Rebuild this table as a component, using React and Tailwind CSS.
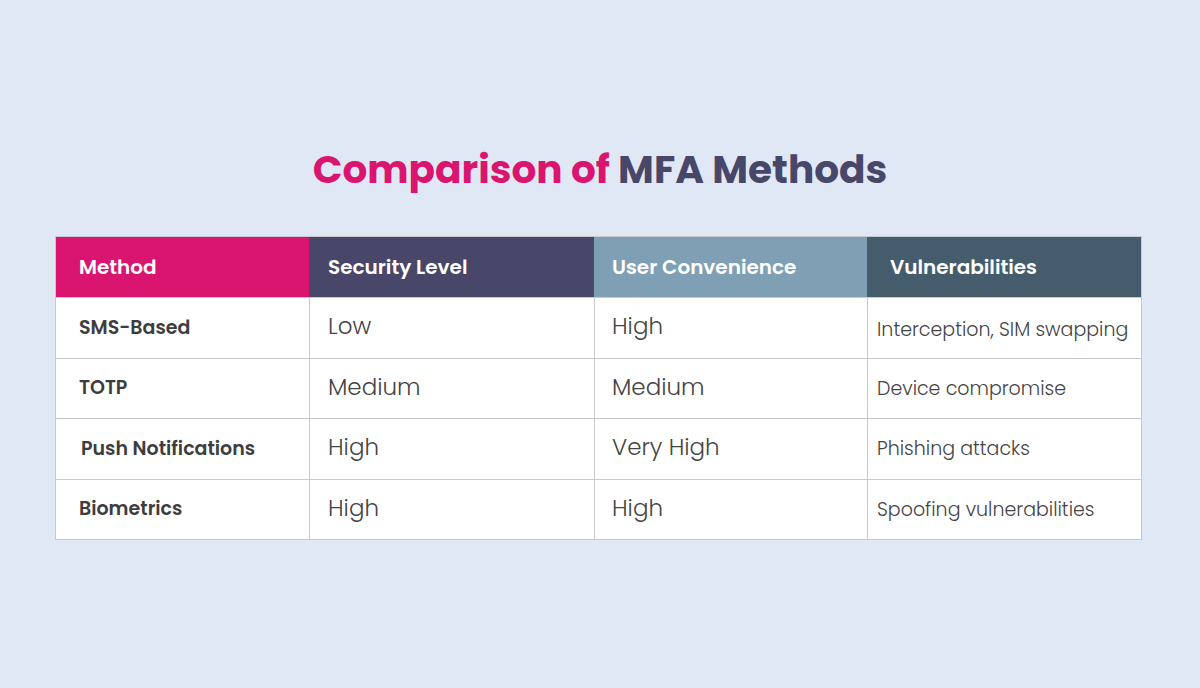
const headers = [
  { label: 'Method', bg: 'bg-[#d91570]', pad: 'pl-[23px]' },
  { label: 'Security Level', bg: 'bg-[#484769]', pad: 'pl-[19px]' },
  { label: 'User Convenience', bg: 'bg-[#7f9fb4]', pad: 'pl-[18px]' },
  { label: 'Vulnerabilities', bg: 'bg-[#455c6d]', pad: 'pl-[23px]' },
];

const rows = [
  ['SMS-Based', 'Low', 'High', 'Interception, SIM swapping'],
  ['TOTP', 'Medium', 'Medium', 'Device compromise'],
  ['Push Notifications', 'High', 'Very High', 'Phishing attacks'],
  ['Biometrics', 'High', 'High', 'Spoofing vulnerabilities'],
];

const font = { fontFamily: '"Poppins", Inter, "Noto Sans", sans-serif' };

export default function App() {
  return (
    <div className="min-h-[688px] w-full bg-[#e1e8f5] pt-[142px]" style={font}>
      <h1 className="text-center text-[39px] font-bold leading-[56px]">
        <span className="text-[#d91570]">Comparison of </span>
        <span className="text-[#484769]">MFA Methods</span>
      </h1>

      <div className="ml-[55px] mt-[38px] w-[1087px] border border-[#c9c9c9] bg-white">
        <div className="grid h-[60px] grid-cols-[253px_285px_273px_274px]">
          {headers.map((h) => (
            <div key={h.label} className={`${h.bg} ${h.pad} flex items-center text-[20px] font-semibold text-white`}>
              {h.label}
            </div>
          ))}
        </div>
        {rows.map((r, i) => (
          <div key={i} className="grid h-[60.5px] grid-cols-[253px_285px_273px_274px] border-t border-[#c9c9c9]">
            <div className={`flex items-center ${i === 2 ? 'pl-[25px]' : 'pl-[23px]'} text-[19px] font-semibold text-[#3d3d3d]`}>
              {r[0]}
            </div>
            <div className="flex items-center border-l border-[#c9c9c9] pl-[18px] pb-[3px] text-[23px] font-light text-[#444444]">
              {r[1]}
            </div>
            <div className="flex items-center border-l border-[#c9c9c9] pl-[17px] pb-[3px] text-[23px] font-light text-[#444444]">
              {r[2]}
            </div>
            <div className={`flex items-center border-l border-[#c9c9c9] pl-[9px] ${i === 0 ? 'pt-[4px]' : 'pt-[1px]'} text-[19px] font-light text-[#444444]`}>
              {r[3]}
            </div>
          </div>
        ))}
      </div>
    </div>
  );
}
